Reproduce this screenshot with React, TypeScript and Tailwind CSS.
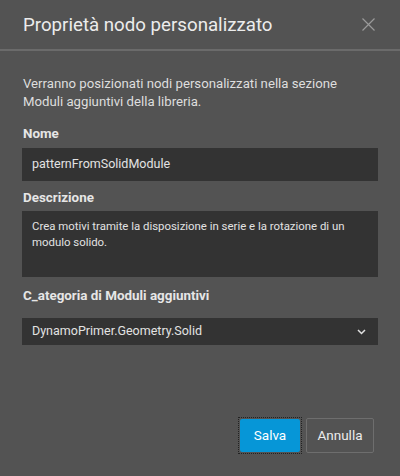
import React from "react";

export default function App() {
  return (
    <div className="w-[400px] h-[476px] bg-[#535353] flex flex-col text-[#e6e6e6]" style={{ fontFamily: "Roboto, 'Noto Sans', sans-serif" }}>
      <div className="h-[51px] flex items-center justify-between pl-[23px] pr-[25px] border-b-2 border-[#6b6b6b] shrink-0">
        <div className="text-[18.7px] leading-none text-[#ececec] mt-[1px]">Proprietà nodo personalizzato</div>
        <svg width="13" height="13" viewBox="0 0 13 13" className="text-[#9a9a9a]">
          <path d="M0.5 0.5L12.5 12.5M12.5 0.5L0.5 12.5" stroke="currentColor" strokeWidth="1.2" />
        </svg>
      </div>
      <div className="flex flex-col px-[22px] pt-[24px] flex-1">
        <p className="text-[13.2px] leading-[18px] text-[#dedede] pl-[1px] whitespace-nowrap">
          Verranno posizionati nodi personalizzati nella sezione
          <br />
          Moduli aggiuntivi della libreria.
        </p>
        <div className="mt-[14px] text-[13.4px] font-bold text-[#e6e6e6] leading-[18px] pl-[1px]">Nome</div>
        <div className="mt-[5px] h-[33px] bg-[#333333] flex items-center px-[10px] text-[12.5px] text-[#e2e2e2]">
          patternFromSolidModule
        </div>
        <div className="mt-[8px] text-[13.4px] font-bold text-[#e6e6e6] leading-[18px] pl-[1px]">Descrizione</div>
        <div className="mt-[4px] h-[66px] bg-[#333333] px-[10px] pt-[8px] text-[11.4px] leading-[15.5px] text-[#e2e2e2] whitespace-nowrap">
          Crea motivi tramite la disposizione in serie e la rotazione di un
          <br />
          modulo solido.
        </div>
        <div className="mt-[10px] text-[13.4px] font-bold text-[#e6e6e6] leading-[18px] pl-[1px]">C_ategoria di Moduli aggiuntivi</div>
        <div className="mt-[13px] h-[27px] bg-[#333333] flex items-center justify-between pl-[10px] pr-[12px] text-[12.5px] text-[#e2e2e2]">
          <span>DynamoPrimer.Geometry.Solid</span>
          <svg width="9" height="6" viewBox="0 0 9 6">
            <path d="M1 1L4.5 4.5L8 1" stroke="#e0e0e0" strokeWidth="1.5" fill="none" />
          </svg>
        </div>
        <div className="flex-1" />
        <div className="flex justify-end gap-[4px] pb-[22px] pr-[4px]">
          <div className="p-[1px] border border-dotted border-[#222]">
            <button className="w-[60px] h-[33px] bg-[#0696d7] rounded-[2px] text-[13.5px] text-white">Salva</button>
          </div>
          <button className="w-[68px] h-[35px] mt-[1px] border border-[#6e6e6e] rounded-[2px] text-[13.5px] text-[#ececec]">Annulla</button>
        </div>
      </div>
    </div>
  );
}
